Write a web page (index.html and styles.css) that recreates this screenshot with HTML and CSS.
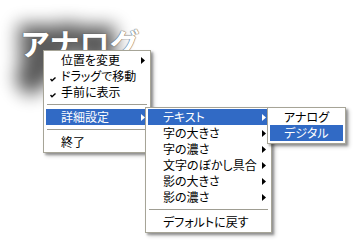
FILE: index.html
```html
<!DOCTYPE html>
<html lang="ja">
<head>
<meta charset="utf-8">
<link rel="stylesheet" href="styles.css">
</head>
<body>
<div class="stage">
  <div class="logo-wrap">
    <div class="logo" data-text="アナログ">アナログ</div>
  </div>

  <div class="menu m1">
    <div class="item"><span class="mark"></span><span class="label">位置を変更</span><svg class="arrow" viewBox="0 0 4 7"><polygon points="0,0 4,3.5 0,7"/></svg></div>
    <div class="item"><span class="mark"><svg class="check" viewBox="0 0 6 5"><polyline points="0.5,2 2,3.8 5.5,0.5"/></svg></span><span class="label">ドラッグで移動</span></div>
    <div class="item"><span class="mark"><svg class="check" viewBox="0 0 6 5"><polyline points="0.5,2 2,3.8 5.5,0.5"/></svg></span><span class="label">手前に表示</span></div>
    <div class="sep"></div>
    <div class="item active"><span class="mark"></span><span class="label">詳細設定</span><svg class="arrow" viewBox="0 0 4 7"><polygon points="0,0 4,3.5 0,7"/></svg></div>
    <div class="sep"></div>
    <div class="item"><span class="mark"></span><span class="label">終了</span></div>
  </div>

  <div class="menu m2">
    <div class="item active"><span class="mark"></span><span class="label">テキスト</span><svg class="arrow" viewBox="0 0 4 7"><polygon points="0,0 4,3.5 0,7"/></svg></div>
    <div class="item"><span class="mark"></span><span class="label">字の大きさ</span><svg class="arrow" viewBox="0 0 4 7"><polygon points="0,0 4,3.5 0,7"/></svg></div>
    <div class="item"><span class="mark"></span><span class="label">字の濃さ</span><svg class="arrow" viewBox="0 0 4 7"><polygon points="0,0 4,3.5 0,7"/></svg></div>
    <div class="item"><span class="mark"></span><span class="label">文字のぼかし具合</span><svg class="arrow" viewBox="0 0 4 7"><polygon points="0,0 4,3.5 0,7"/></svg></div>
    <div class="item"><span class="mark"></span><span class="label">影の大きさ</span><svg class="arrow" viewBox="0 0 4 7"><polygon points="0,0 4,3.5 0,7"/></svg></div>
    <div class="item"><span class="mark"></span><span class="label">影の濃さ</span><svg class="arrow" viewBox="0 0 4 7"><polygon points="0,0 4,3.5 0,7"/></svg></div>
    <div class="sep"></div>
    <div class="item"><span class="mark"></span><span class="label">デフォルトに戻す</span></div>
  </div>

  <div class="menu m3">
    <div class="item"><span class="mark narrow"></span><span class="label">アナログ</span></div>
    <div class="item active"><span class="mark narrow"></span><span class="label">デジタル</span></div>
  </div>
</div>
</body>
</html>
```

FILE: styles.css
```css
html, body {
  margin: 0;
  padding: 0;
  background: #fff;
}

.stage {
  position: relative;
  width: 362px;
  height: 246px;
  overflow: hidden;
  background: #fff;
  font-family: "Noto Sans CJK JP", "Noto Sans", sans-serif;
}

.logo-wrap {
  padding: 27px 0 0 20px;
  isolation: isolate;
}

.logo {
  position: relative;
  display: inline-block;
  font-size: 30px;
  line-height: 30px;
  font-weight: 700;
  color: #fff;
  text-shadow: 0 0 1px #444, 0 0 1px #666;
}

.logo::before {
  content: attr(data-text);
  position: absolute;
  left: 2px;
  top: -1px;
  z-index: -1;
  color: #000;
  -webkit-text-stroke: 14px #000;
  filter: blur(9px);
  opacity: 0.65;
  text-shadow: none;
}

.menu {
  position: absolute;
  box-sizing: border-box;
  background: #fff;
  border: 1px solid #a6a497;
  padding: 1px 2px 2px 2px;
  box-shadow: 2px 2px 2px rgba(0, 0, 0, 0.3), 3px 3px 4px rgba(0, 0, 0, 0.2);
  font-size: 12px;
  color: #000;
  font-feature-settings: "palt";
}

.m1 { left: 43px; top: 50px; width: 108px; z-index: 1; }
.m2 { left: 145px; top: 107px; width: 127px; z-index: 2; }
.m3 { left: 267px; top: 107px; width: 79px; z-index: 3; }

.item {
  display: flex;
  align-items: center;
  height: 16px;
  line-height: 16px;
  padding-right: 3px;
  white-space: nowrap;
}

.item.active {
  background: #316ac5;
  color: #fff;
}

.mark {
  width: 15px;
  flex: none;
  display: flex;
  align-items: flex-end;
  padding-left: 4px;
  box-sizing: border-box;
  height: 16px;
  padding-bottom: 2px;
}

.mark.narrow { width: 14px; }

.check {
  width: 6px;
  height: 5px;
  fill: none;
  stroke: #000;
  stroke-width: 1.4;
}

.label {
  flex: 1;
}

.arrow {
  width: 4px;
  height: 7px;
  flex: none;
  fill: #000;
}

.item.active .arrow { fill: #fff; }

.sep {
  height: 9px;
  display: flex;
  flex-direction: column;
  justify-content: center;
  padding: 0 1px;
}

.sep::before {
  content: "";
  display: block;
  height: 1px;
  background: #9f9d92;
}
```
